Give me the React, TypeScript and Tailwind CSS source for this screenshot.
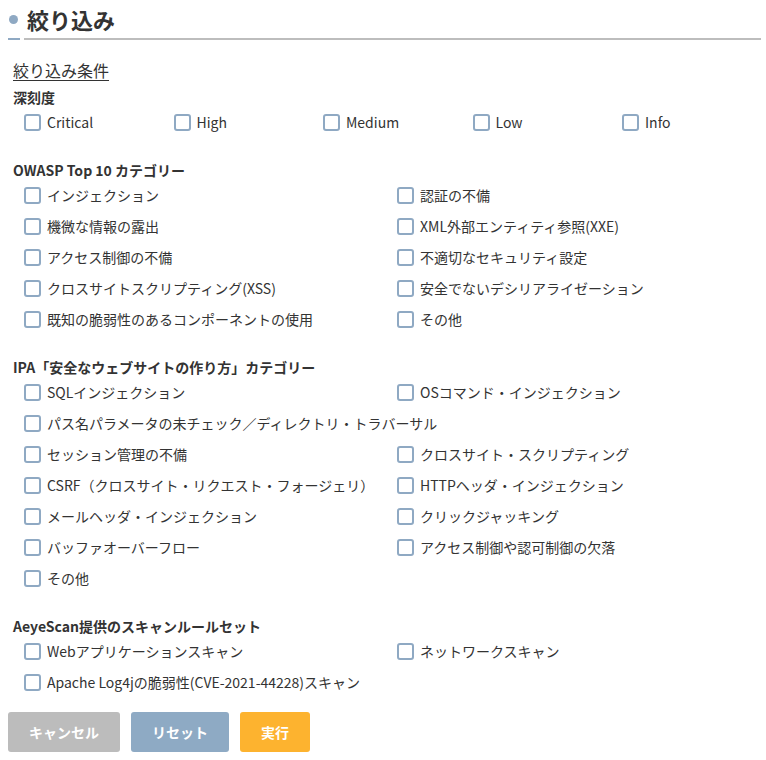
import React from "react"

const severities = ["Critical", "High", "Medium", "Low", "Info"]

const owasp = [
  "インジェクション",
  "認証の不備",
  "機微な情報の露出",
  "XML外部エンティティ参照(XXE)",
  "アクセス制御の不備",
  "不適切なセキュリティ設定",
  "クロスサイトスクリプティング(XSS)",
  "安全でないデシリアライゼーション",
  "既知の脆弱性のあるコンポーネントの使用",
  "その他",
]

// null = full-width row
const ipa: (string | [string, string])[] = [
  ["SQLインジェクション", "OSコマンド・インジェクション"],
  "パス名パラメータの未チェック／ディレクトリ・トラバーサル",
  ["セッション管理の不備", "クロスサイト・スクリプティング"],
  ["CSRF（クロスサイト・リクエスト・フォージェリ）", "HTTPヘッダ・インジェクション"],
  ["メールヘッダ・インジェクション", "クリックジャッキング"],
  ["バッファオーバーフロー", "アクセス制御や認可制御の欠落"],
  "その他",
]

function Check({ label }: { label: string }) {
  return (
    <label className="flex items-center gap-[6px] h-[31px] whitespace-nowrap cursor-pointer">
      <span className="w-[17px] h-[17px] border-2 border-[#8fa9c3] rounded-[3px] bg-white shrink-0" />
      <span className="text-[14px] text-[#333]">{label}</span>
    </label>
  )
}

function Heading({ children }: { children: React.ReactNode }) {
  return <div className="h-[20px] leading-[20px] text-[14px] font-bold text-[#333]">{children}</div>
}

export default function App() {
  return (
    <div
      className="w-[766px] h-[760px] bg-white pl-2 pr-[5px] text-[#333]"
      style={{ fontFamily: '"Noto Sans CJK JP", "Noto Sans", sans-serif' }}
    >
      {/* title */}
      <div className="h-[38px] flex items-center">
        <span className="w-[9px] h-[9px] rounded-full bg-[#8fa9c3] ml-px" />
        <h1 className="ml-[9px] text-[22px] font-bold text-[#333] leading-none">絞り込み</h1>
      </div>
      <div className="flex items-center gap-1">
        <div className="w-3 h-[2px] bg-[#8fa9c3]" />
        <div className="flex-1 h-[2px] bg-[#bdbdbd]" />
      </div>

      <div className="pl-[5px]">
        <div className="mt-[19px] h-[22px] leading-[22px] text-[16px] underline underline-offset-[3px]">絞り込み条件</div>

        <div className="mt-[6px]">
          <Heading>深刻度</Heading>
          <div className="ml-[11px] grid grid-cols-[repeat(5,149.5px)]">
            {severities.map((s) => (
              <Check key={s} label={s} />
            ))}
          </div>
        </div>

        <div className="mt-[22px]">
          <Heading>OWASP Top 10 カテゴリー</Heading>
          <div className="ml-[11px] grid grid-cols-[373px_1fr]">
            {owasp.map((o) => (
              <Check key={o} label={o} />
            ))}
          </div>
        </div>

        <div className="mt-[22px]">
          <Heading>IPA「安全なウェブサイトの作り方」カテゴリー</Heading>
          <div className="ml-[11px] grid grid-cols-[373px_1fr]">
            {ipa.map((row, i) =>
              Array.isArray(row) ? (
                <React.Fragment key={i}>
                  <Check label={row[0]} />
                  <Check label={row[1]} />
                </React.Fragment>
              ) : (
                <div key={i} className="col-span-2">
                  <Check label={row} />
                </div>
              )
            )}
          </div>
        </div>

        <div className="mt-[22px]">
          <Heading>AeyeScan提供のスキャンルールセット</Heading>
          <div className="ml-[11px] grid grid-cols-[373px_1fr]">
            <Check label="Webアプリケーションスキャン" />
            <Check label="ネットワークスキャン" />
            <div className="col-span-2">
              <Check label="Apache Log4jの脆弱性(CVE-2021-44228)スキャン" />
            </div>
          </div>
        </div>
      </div>

      {/* buttons */}
      <div className="mt-[14px] flex gap-[11px]">
        <button className="w-[112px] h-10 rounded-[3px] bg-[#bcbcbc] text-white text-[14px] font-bold">キャンセル</button>
        <button className="w-[98px] h-10 rounded-[3px] bg-[#8eaac4] text-white text-[14px] font-bold">リセット</button>
        <button className="w-[70px] h-10 rounded-[3px] bg-[#fdb32f] text-white text-[14px] font-bold">実行</button>
      </div>
    </div>
  )
}
